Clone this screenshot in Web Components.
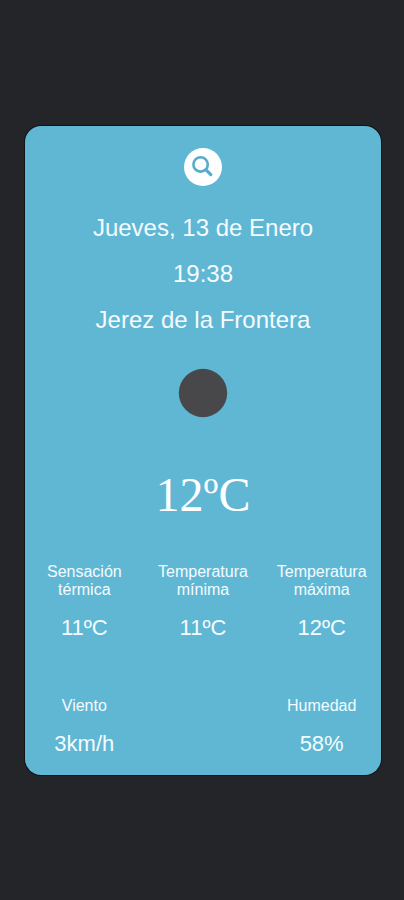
<!DOCTYPE html>
<html lang="es">
<head>
<meta charset="utf-8">
<meta name="viewport" content="width=device-width, initial-scale=1">
<title>El tiempo</title>
<style>
  body {
    margin: 0;
    background: #242529;
    color: #f4fcff;
    font-family: "Liberation Sans", Arial, sans-serif;
  }
</style>
</head>
<body>
<weather-app></weather-app>

<script>
  const define = (name, html) => {
    const template = document.createElement('template');
    template.innerHTML = html;
    customElements.define(name, class extends HTMLElement {
      constructor() {
        super();
        this.attachShadow({ mode: 'open' }).append(template.content.cloneNode(true));
      }
    });
  };

  define('search-button', `
    <style>
      :host { display: block; }
      button {
        display: grid;
        place-items: center;
        width: 38px;
        height: 38px;
        padding: 0;
        border: 0;
        border-radius: 50%;
        background: #fff;
        color: #56adca;
        cursor: pointer;
      }
      svg { display: block; }
    </style>
    <button type="button" aria-label="Buscar">
      <svg width="24" height="24" viewBox="0 0 24 24" fill="none" stroke="currentColor" aria-hidden="true">
        <circle cx="9.6" cy="9.4" r="7.2" stroke-width="2.6"/>
        <path d="M15 14.8 19.8 19.6" stroke-width="3.2" stroke-linecap="round"/>
      </svg>
    </button>`);

  define('weather-heading', `
    <style>
      :host { display: flex; flex-direction: column; gap: 18px; text-align: center; }
      ::slotted(*) { margin: 0; font-size: 24px; line-height: 28px; font-weight: 400; }
    </style>
    <slot></slot>`);

  define('weather-icon', `
    <style>
      :host { display: block; }
      svg { display: block; }
    </style>
    <svg width="50" height="50" viewBox="0 0 50 50" role="img" aria-label="Noche despejada">
      <circle cx="25" cy="25" r="24.2" fill="#48484a"/>
    </svg>`);

  define('main-temperature', `
    <style>
      :host {
        display: block;
        color: #fff;
        font-family: "Liberation Serif", "Times New Roman", serif;
        font-size: 48px;
        line-height: 56px;
      }
    </style>
    <slot></slot>`);

  define('weather-stat', `
    <style>
      :host { display: flex; flex-direction: column; align-items: center; gap: 16px; text-align: center; }
      .label { font-size: 16px; line-height: 18px; padding: 0 12px; }
      .value { font-size: 22px; line-height: 26px; }
    </style>
    <div class="label"><slot name="label"></slot></div>
    <div class="value"><slot></slot></div>`);

  define('stat-grid', `
    <style>
      :host {
        display: grid;
        grid-template-columns: repeat(3, 1fr);
        row-gap: 56px;
        align-self: stretch;
      }
      ::slotted(.last) { grid-column: 3; }
    </style>
    <slot></slot>`);

  define('weather-card', `
    <style>
      :host {
        display: flex;
        flex-direction: column;
        align-items: center;
        padding: 22px 0 18px;
        border-radius: 16px;
        background: #60b7d4;
        box-shadow: 0 0 0 1px #111317;
      }
      ::slotted(weather-heading) { margin-top: 28px; }
      ::slotted(weather-icon) { margin-top: 34px; }
      ::slotted(main-temperature) { margin-top: 49px; }
      ::slotted(stat-grid) { margin-top: 40px; }
    </style>
    <slot></slot>`);

  define('weather-app', `
    <style>
      :host {
        display: flex;
        flex-direction: column;
        justify-content: center;
        box-sizing: border-box;
        min-height: 100vh;
        padding: 24px 23px 24px 25px;
      }
    </style>
    <weather-card>
      <search-button></search-button>
      <weather-heading>
        <p>Jueves, 13 de Enero</p>
        <p>19:38</p>
        <h1>Jerez de la Frontera</h1>
      </weather-heading>
      <weather-icon></weather-icon>
      <main-temperature>12ºC</main-temperature>
      <stat-grid>
        <weather-stat><span slot="label">Sensación térmica</span>11ºC</weather-stat>
        <weather-stat><span slot="label">Temperatura mínima</span>11ºC</weather-stat>
        <weather-stat><span slot="label">Temperatura máxima</span>12ºC</weather-stat>
        <weather-stat><span slot="label">Viento</span>3km/h</weather-stat>
        <weather-stat class="last"><span slot="label">Humedad</span>58%</weather-stat>
      </stat-grid>
    </weather-card>`);
</script>
</body>
</html>
